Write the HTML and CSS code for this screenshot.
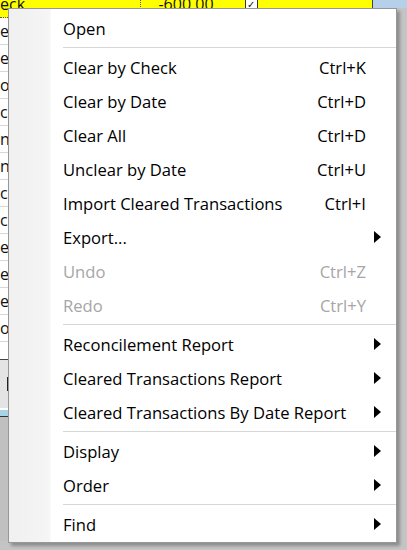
FILE: index.html
```html
<!DOCTYPE html>
<html>
<head>
<meta charset="utf-8">
<link rel="stylesheet" href="styles.css">
</head>
<body>
<div class="app">
  <div class="main">
    <div class="table">
      <div class="row row-sel"><span class="cell-a">eck</span><span class="cell-amt">-600.00</span><span class="cell-chk"><span class="chk">✓</span></span></div>
      <div class="row"><span class="cell-a">ec</span></div>
      <div class="row"><span class="cell-a">ec</span></div>
      <div class="row"><span class="cell-a">oc</span></div>
      <div class="row"><span class="cell-a">co</span></div>
      <div class="row"><span class="cell-a">ns</span></div>
      <div class="row"><span class="cell-a">ns</span></div>
      <div class="row"><span class="cell-a">co</span></div>
      <div class="row"><span class="cell-a">co</span></div>
      <div class="row"><span class="cell-a">ec</span></div>
      <div class="row"><span class="cell-a">ec</span></div>
      <div class="row"><span class="cell-a">ec</span></div>
      <div class="row"><span class="cell-a">oc</span></div>
      <div class="blank"></div>
      <div class="footer"><span class="bar"></span></div>
      <div class="status"></div>
    </div>
    <div class="side"><div class="side-top"></div></div>
  </div>

  <div class="menu">
    <div class="item"><span class="label">Open</span></div>
    <div class="sep"></div>
    <div class="item"><span class="label">Clear by Check</span><span class="key">Ctrl+K</span></div>
    <div class="item"><span class="label">Clear by Date</span><span class="key">Ctrl+D</span></div>
    <div class="item"><span class="label">Clear All</span><span class="key">Ctrl+D</span></div>
    <div class="item"><span class="label">Unclear by Date</span><span class="key">Ctrl+U</span></div>
    <div class="item"><span class="label">Import Cleared Transactions</span><span class="key">Ctrl+I</span></div>
    <div class="item"><span class="label">Export...</span><span class="arrow"></span></div>
    <div class="item disabled"><span class="label">Undo</span><span class="key">Ctrl+Z</span></div>
    <div class="item disabled"><span class="label">Redo</span><span class="key">Ctrl+Y</span></div>
    <div class="sep"></div>
    <div class="item"><span class="label">Reconcilement Report</span><span class="arrow"></span></div>
    <div class="item"><span class="label">Cleared Transactions Report</span><span class="arrow"></span></div>
    <div class="item"><span class="label">Cleared Transactions By Date Report</span><span class="arrow"></span></div>
    <div class="sep"></div>
    <div class="item"><span class="label">Display</span><span class="arrow"></span></div>
    <div class="item"><span class="label">Order</span><span class="arrow"></span></div>
    <div class="sep"></div>
    <div class="item"><span class="label">Find</span><span class="arrow"></span></div>
  </div>
</div>
</body>
</html>
```

FILE: styles.css
```css
html, body {
  margin: 0;
  padding: 0;
}
body {
  font-family: "Open Sans", "Noto Sans", sans-serif;
  background: #c4c4c4;
}
.app {
  position: relative;
  width: 407px;
  height: 550px;
  overflow: hidden;
  background: #c4c4c4;
}
.main {
  display: flex;
  height: 550px;
  margin-top: -9px;
}
.table {
  width: 372px;
  display: flex;
  flex-direction: column;
  background: #c0c0c0;
}
.row {
  height: 26px;
  border-bottom: 1px solid #d8d8d8;
  background: #ffffff;
  display: flex;
  align-items: center;
  font-size: 16px;
  color: #111;
}
.row-sel {
  background: #ffff00;
  border-bottom: 1px dotted #555;
}
.cell-a {
  width: 140px;
}
.cell-amt {
  width: 90px;
  text-align: center;
  border-left: 1px dotted #555;
}
.cell-chk {
  width: 40px;
  display: flex;
  justify-content: center;
}
.chk {
  width: 11px;
  height: 11px;
  border: 1px solid #333;
  font-size: 10px;
  line-height: 11px;
  text-align: center;
  background: #fff;
}
.blank {
  height: 17px;
  background: #fff;
  border-bottom: 1px solid #444;
}
.footer {
  height: 48px;
  background: #e4e4e4;
  display: flex;
  align-items: center;
  border-bottom: 2px solid #fff;
}
.bar {
  width: 2px;
  height: 14px;
  margin-left: 7px;
  background: #222;
}
.status {
  height: 6px;
  background: #a8d4e8;
  border-bottom: 1px solid #333;
}
.side {
  flex: 1;
  background: #c4c4c4;
}
.side-top {
  height: 17px;
  background: #b5d0e8;
  border-left: 1px solid #444;
}

/* popup menu */
.menu {
  position: absolute;
  left: 8px;
  top: 8px;
  width: 387px;
  padding: 2px 0 1px;
  border: 1px solid #979797;
  background:
    linear-gradient(to right, #f0f0f0 0, #f3f3f3 28px, #f6f6f6 41px, #ffffff 42px);
  box-shadow: 3px 3px 3px rgba(0, 0, 0, 0.28);
  font-size: 16.6px;
  color: #000;
}
.item {
  height: 34px;
  display: flex;
  align-items: center;
  padding-left: 54px;
  padding-right: 30px;
  position: relative;
}
.label {
  flex: 1;
  white-space: nowrap;
}
.key {
  white-space: nowrap;
}
.arrow {
  position: absolute;
  right: 15px;
  top: 11px;
  width: 0;
  height: 0;
  border-top: 6px solid transparent;
  border-bottom: 6px solid transparent;
  border-left: 7px solid #000;
}
.disabled {
  color: #a6a6a6;
}
.sep {
  height: 1px;
  margin: 2px 0 2px 54px;
  background: #d7d7d7;
}
```
